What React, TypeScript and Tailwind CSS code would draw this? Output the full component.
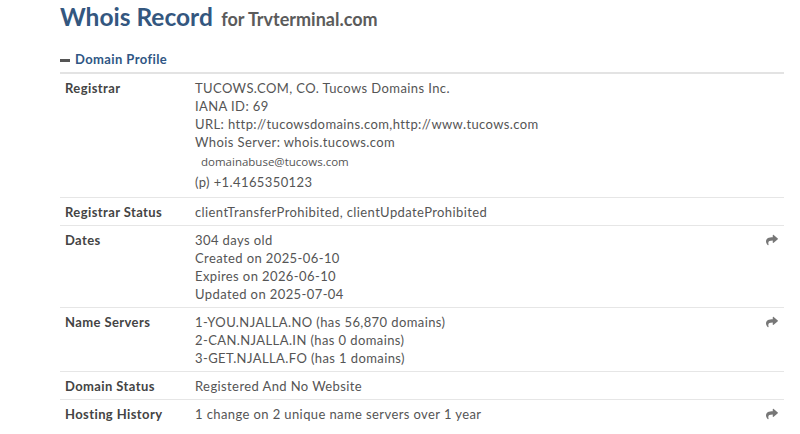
import React from "react";
import { FaShare } from "react-icons/fa";

type Row = { label: string; lines: React.ReactNode[]; arrow?: boolean };

const rows: Row[] = [
  {
    label: "Registrar",
    lines: [
      "TUCOWS.COM, CO. Tucows Domains Inc.",
      "IANA ID: 69",
      "URL: http://tucowsdomains.com,http://www.tucows.com",
      "Whois Server: whois.tucows.com",
      <span
        className="block pl-[6px] pt-[2px] pb-[2px] text-[11.5px] leading-[18px] tracking-normal text-[#555]"
        style={{ fontFamily: '"Open Sans", sans-serif' }}
      >
        domainabuse@tucows.com
      </span>,
      <span className="block pb-[2px]">(p) +1.4165350123</span>,
    ],
  },
  { label: "Registrar Status", lines: ["clientTransferProhibited, clientUpdateProhibited"] },
  {
    label: "Dates",
    lines: ["304 days old", "Created on 2025-06-10", "Expires on 2026-06-10", "Updated on 2025-07-04"],
    arrow: true,
  },
  {
    label: "Name Servers",
    lines: [
      "1-YOU.NJALLA.NO (has 56,870 domains)",
      "2-CAN.NJALLA.IN (has 0 domains)",
      "3-GET.NJALLA.FO (has 1 domains)",
    ],
    arrow: true,
  },
  { label: "Domain Status", lines: ["Registered And No Website"] },
  { label: "Hosting History", lines: ["1 change on 2 unique name servers over 1 year"], arrow: true },
];

export default function App() {
  return (
    <div className="w-[800px] h-[434px] overflow-hidden bg-white" style={{ fontFamily: "Lato, sans-serif" }}>
      <div className="pl-[60px] pr-[16px] pt-[2px]">
        <h1 className="leading-[30px] whitespace-nowrap">
          <span className="text-[24.5px] font-bold text-[#34577f]">Whois Record</span>
          <span className="ml-[4px] text-[18px] font-bold text-[#5b5b5b]"> for Trvterminal.com</span>
        </h1>
        <div className="mt-[16px] flex items-center h-[18px] text-[13px] font-bold tracking-[0.4px] text-[#2f5684]">
          <span className="inline-block w-[10px] h-[3px] bg-[#555] mr-[5px]"></span>
          Domain Profile
        </div>
        <div className="mt-[3px] border-t-2 border-[#e3e3e3]">
          {rows.map((r, i) => (
            <div
              key={i}
              className={`flex pt-[5px] pb-[4px] ${i < rows.length - 1 ? "border-b border-[#e6e6e6]" : ""}`}
            >
              <div className="w-[135px] pl-[5px] shrink-0 text-[13px] font-bold leading-[18px] tracking-[0.4px] text-[#444]">
                {r.label}
              </div>
              <div className="flex-1 text-[13px] leading-[18px] tracking-[0.4px] text-[#555] whitespace-pre">
                {r.lines.map((l, j) => (
                  <div key={j}>{l}</div>
                ))}
              </div>
              <div className="w-[24px] shrink-0 flex justify-center pt-[3px]">
                {r.arrow && <FaShare className="text-[#777] w-[12px] h-[12px]" />}
              </div>
            </div>
          ))}
        </div>
      </div>
    </div>
  );
}
